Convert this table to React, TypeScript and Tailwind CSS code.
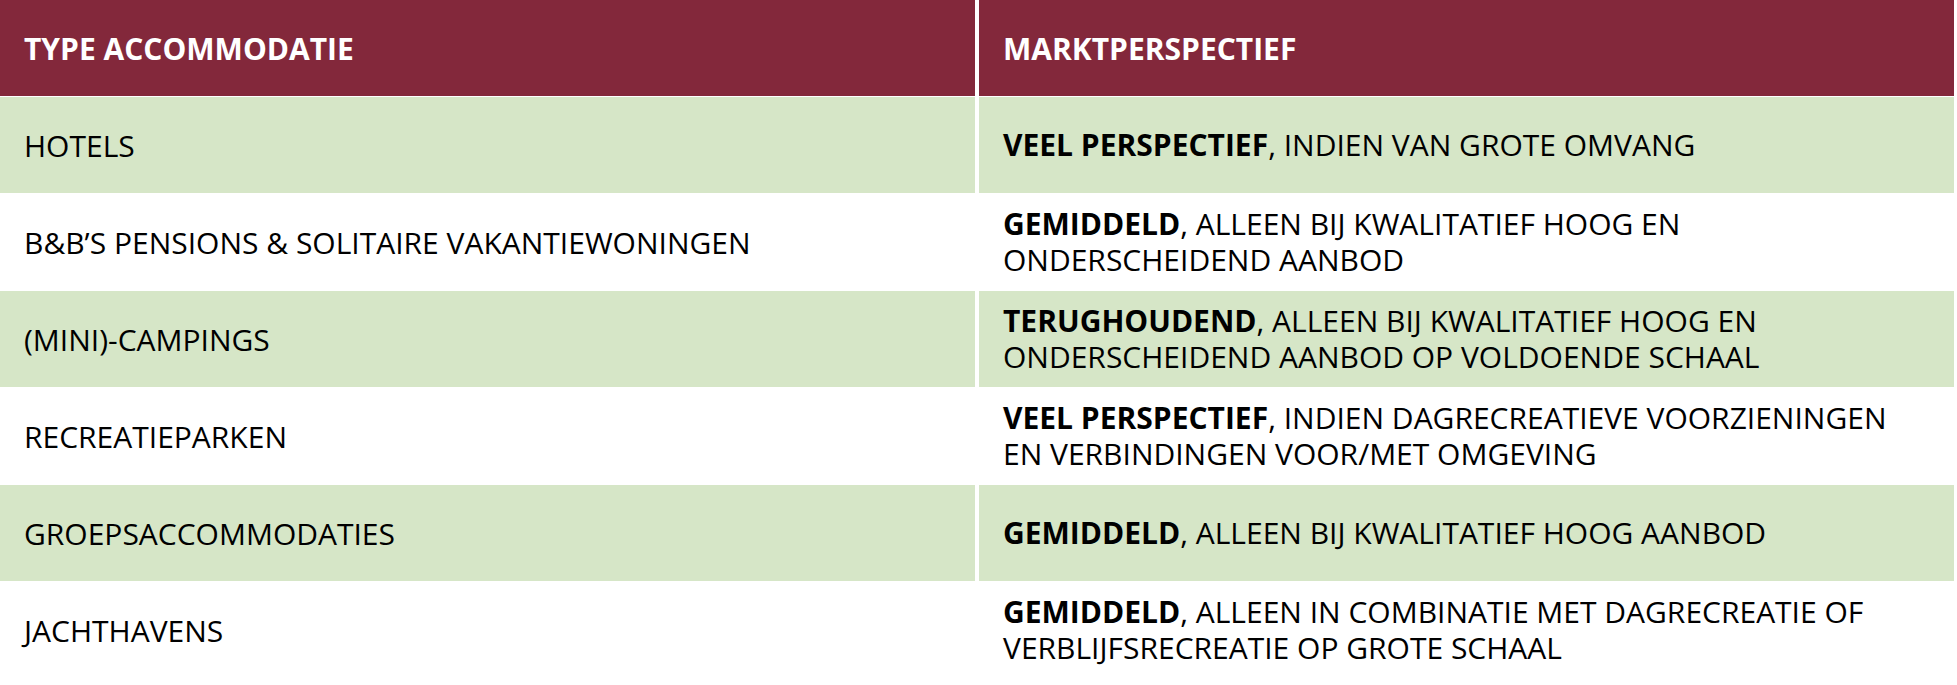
import React from "react";

type Row = {
  type: string;
  strong: string;
  lines: string[]; // rest of the first line, then any extra lines
  green: boolean;
};

const rows: Row[] = [
  { type: "HOTELS", strong: "VEEL PERSPECTIEF", lines: [", INDIEN VAN GROTE OMVANG"], green: true },
  {
    type: "B&B’S PENSIONS & SOLITAIRE VAKANTIEWONINGEN",
    strong: "GEMIDDELD",
    lines: [", ALLEEN BIJ KWALITATIEF HOOG EN", "ONDERSCHEIDEND AANBOD"],
    green: false,
  },
  {
    type: "(MINI)-CAMPINGS",
    strong: "TERUGHOUDEND",
    lines: [", ALLEEN BIJ KWALITATIEF HOOG EN", "ONDERSCHEIDEND AANBOD OP VOLDOENDE SCHAAL"],
    green: true,
  },
  {
    type: "RECREATIEPARKEN",
    strong: "VEEL PERSPECTIEF",
    lines: [", INDIEN DAGRECREATIEVE VOORZIENINGEN", "EN VERBINDINGEN VOOR/MET OMGEVING"],
    green: false,
  },
  {
    type: "GROEPSACCOMMODATIES",
    strong: "GEMIDDELD",
    lines: [", ALLEEN BIJ KWALITATIEF HOOG AANBOD"],
    green: true,
  },
  {
    type: "JACHTHAVENS",
    strong: "GEMIDDELD",
    lines: [", ALLEEN IN COMBINATIE MET DAGRECREATIE OF", "VERBLIJFSRECREATIE OP GROTE SCHAAL"],
    green: false,
  },
];

export default function App() {
  return (
    <div className="w-[1957px] h-[685px] bg-white font-['Open_Sans',_'Noto_Sans',_sans-serif] text-black">
      <div className="grid grid-cols-[975px_975px] gap-x-[4px] gap-y-px">
        {/* HEADER */}
        <div className="h-[96px] bg-[#83283b] flex items-center pl-[24px] text-white font-bold text-[30px]">
          TYPE ACCOMMODATIE
        </div>
        <div className="h-[96px] bg-[#83283b] flex items-center pl-[24px] text-white font-bold text-[30px]">
          MARKTPERSPECTIEF
        </div>

        {/* ROWS */}
        {rows.map((r) => (
          <React.Fragment key={r.type}>
            <div
              className={`h-[96px] flex items-center pl-[24px] text-[30px] ${
                r.green ? "bg-[#d6e6c7]" : "bg-white"
              }`}
            >
              {r.type}
            </div>
            <div
              className={`h-[96px] flex items-center pl-[24px] text-[30px] leading-[36px] ${
                r.green ? "bg-[#d6e6c7]" : "bg-white"
              }`}
            >
              <p className="whitespace-nowrap">
                <span className="font-bold">{r.strong}</span>
                {r.lines[0]}
                {r.lines.slice(1).map((l) => (
                  <React.Fragment key={l}>
                    <br />
                    {l}
                  </React.Fragment>
                ))}
              </p>
            </div>
          </React.Fragment>
        ))}
      </div>
    </div>
  );
}
